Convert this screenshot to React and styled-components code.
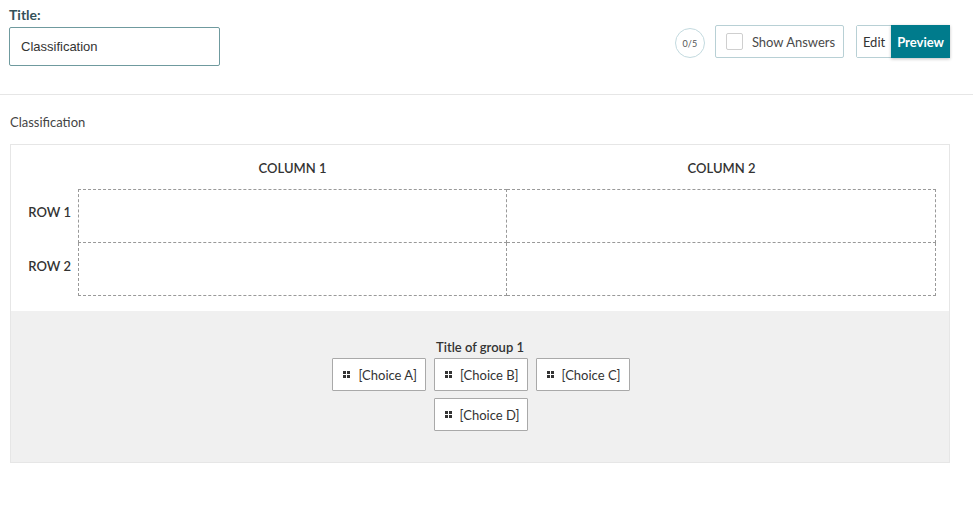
import styled, { createGlobalStyle } from "styled-components";

const GlobalStyle = createGlobalStyle`
  html, body {
    margin: 0;
    padding: 0;
    background: #fff;
    font-family: Lato, "Open Sans", Arial, sans-serif;
    color: #333;
  }
  * {
    box-sizing: border-box;
  }
`;

const Header = styled.header`
  display: flex;
  justify-content: space-between;
  align-items: flex-start;
  padding: 6px 23px 28px 9px;
  border-bottom: 1px solid #e6e6e6;
`;

const TitleField = styled.div`
  display: flex;
  flex-direction: column;
`;

const Label = styled.label`
  font-size: 14px;
  font-weight: 700;
  line-height: 18px;
  color: #35525a;
`;

const TitleInput = styled.input`
  margin-top: 3px;
  width: 211px;
  height: 39px;
  padding: 0 11px;
  border: 1px solid #6f9a9e;
  border-radius: 2px;
  font-family: "Liberation Sans", Arial, sans-serif;
  font-size: 13px;
  color: #333;
  outline: none;
`;

const Toolbar = styled.div`
  display: flex;
  align-items: center;
  margin-top: 19px;
`;

const Counter = styled.div`
  width: 30px;
  height: 30px;
  border: 1px solid #c3dadf;
  border-radius: 50%;
  display: flex;
  align-items: center;
  justify-content: center;
  font-size: 9px;
  color: #555;
  margin-right: 10px;
  margin-top: 3px;
`;

const AnswersToggle = styled.label`
  display: flex;
  align-items: center;
  height: 33px;
  width: 129px;
  padding-left: 10px;
  border: 1px solid #b8d0d5;
  border-radius: 2px;
  font-size: 13px;
  color: #4a4a4a;
  cursor: pointer;
`;

const Box = styled.span`
  width: 17px;
  height: 17px;
  border: 1px solid #cfcfcf;
  border-radius: 2px;
  margin-right: 9px;
`;

const ModeGroup = styled.div`
  display: flex;
  margin-left: 12px;
  height: 33px;
  border: 1px solid #b8d0d5;
  border-radius: 2px;
`;

const ModeButton = styled.button`
  border: none;
  padding: 0 6px;
  font-family: Lato, Arial, sans-serif;
  font-size: 13px;
  font-weight: ${(p) => (p.$active ? 700 : 400)};
  color: ${(p) => (p.$active ? "#fff" : "#333")};
  background: ${(p) => (p.$active ? "#007b8c" : "#fff")};
  box-shadow: ${(p) => (p.$active ? "0 1px 3px rgba(0,0,0,0.25)" : "none")};
  margin: ${(p) => (p.$active ? "-1px -1px -1px 0" : "0")};
  cursor: pointer;
`;

const Body = styled.main`
  padding: 19px 23px 0 10px;
`;

const SectionLabel = styled.div`
  font-size: 13px;
  line-height: 16px;
  color: #444;
  margin-bottom: 14px;
`;

const Card = styled.div`
  border: 1px solid #e6e6e6;
`;

const Matrix = styled.div`
  display: grid;
  grid-template-columns: 67px 1fr 1fr;
  grid-template-rows: 44px 54px 53px;
  padding: 0 13px 15px 0;
`;

const ColumnHead = styled.div`
  display: flex;
  align-items: center;
  justify-content: center;
  font-size: 13px;
  font-weight: 600;
  color: #333;
  padding-top: 2px;
`;

const RowHead = styled.div`
  display: flex;
  align-items: flex-start;
  justify-content: flex-end;
  padding: 15px 7px 0 0;
  line-height: 16px;
  font-size: 13px;
  font-weight: 600;
  color: #333;
`;

const DropCell = styled.div`
  border-right: 1px dashed #999;
  border-bottom: 1px dashed #999;
  border-top: ${(p) => (p.$top ? "1px dashed #999" : "none")};
  border-left: ${(p) => (p.$left ? "1px dashed #999" : "none")};
`;

const Pool = styled.div`
  background: #f0f0f0;
  display: flex;
  flex-direction: column;
  align-items: center;
  padding: 27px 0 31px;
`;

const PoolTitle = styled.div`
  font-size: 13px;
  font-weight: 600;
  line-height: 18px;
  color: #333;
  margin-bottom: 2px;
`;

const Choices = styled.div`
  display: flex;
  flex-wrap: wrap;
  justify-content: center;
  gap: 7px 8px;
  max-width: 310px;
  margin-left: 2px;
`;

const Choice = styled.div`
  display: flex;
  align-items: center;
  height: 33px;
  padding: 0 8px 0 10px;
  background: #fff;
  border: 1px solid #a9a9a9;
  border-radius: 1px;
  font-size: 13px;
  color: #333;
`;

const Grip = styled.span`
  display: grid;
  grid-template-columns: 3px 3px;
  gap: 1px;
  margin-right: 8px;
  span {
    width: 3px;
    height: 3px;
    background: #333;
  }
`;

const columns = ["COLUMN 1", "COLUMN 2"];
const rows = ["ROW 1", "ROW 2"];
const choices = ["[Choice A]", "[Choice B]", "[Choice C]", "[Choice D]"];

export default function App() {
  return (
    <>
      <GlobalStyle />
      <Header>
        <TitleField>
          <Label>Title:</Label>
          <TitleInput defaultValue="Classification" />
        </TitleField>
        <Toolbar>
          <Counter>0/5</Counter>
          <AnswersToggle>
            <Box />
            Show Answers
          </AnswersToggle>
          <ModeGroup>
            <ModeButton>Edit</ModeButton>
            <ModeButton $active>Preview</ModeButton>
          </ModeGroup>
        </Toolbar>
      </Header>
      <Body>
        <SectionLabel>Classification</SectionLabel>
        <Card>
          <Matrix>
            <div />
            {columns.map((c) => (
              <ColumnHead key={c}>{c}</ColumnHead>
            ))}
            {rows.map((r, ri) => [
              <RowHead key={r}>{r}</RowHead>,
              ...columns.map((c, ci) => (
                <DropCell key={r + c} $top={ri === 0} $left={ci === 0} />
              )),
            ])}
          </Matrix>
          <Pool>
            <PoolTitle>Title of group 1</PoolTitle>
            <Choices>
              {choices.map((c) => (
                <Choice key={c}>
                  <Grip>
                    <span />
                    <span />
                    <span />
                    <span />
                  </Grip>
                  {c}
                </Choice>
              ))}
            </Choices>
          </Pool>
        </Card>
      </Body>
    </>
  );
}
